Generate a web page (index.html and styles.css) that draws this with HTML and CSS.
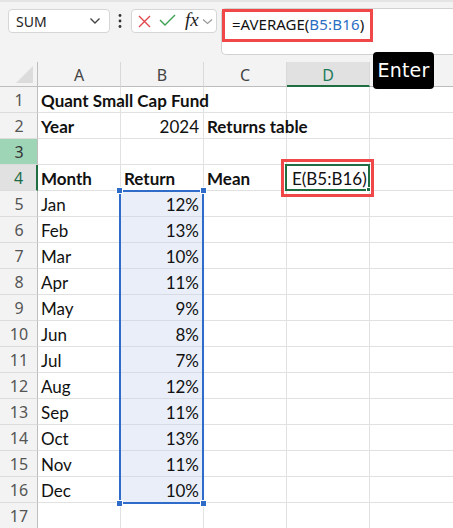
FILE: index.html
```html
<!DOCTYPE html>
<html>
<head>
<meta charset="utf-8">
<link rel="stylesheet" href="styles.css">
</head>
<body>
<div class="app">
  <div class="toolbar">
    <div class="namebox">
      <span class="nb-text">SUM</span>
      <svg class="nb-chev" width="12" height="8" viewBox="0 0 12 8"><path d="M1.5 1.5 L6 6 L10.5 1.5" fill="none" stroke="#444" stroke-width="1.4"/></svg>
    </div>
    <svg class="dots" width="4" height="16" viewBox="0 0 4 16"><circle cx="2" cy="2.5" r="1.4" fill="#333"/><circle cx="2" cy="8" r="1.4" fill="#333"/><circle cx="2" cy="13.5" r="1.4" fill="#333"/></svg>
    <div class="fxbox">
      <svg class="ic-x" width="13" height="13" viewBox="0 0 13 13"><path d="M1 1 L12 12 M12 1 L1 12" stroke="#e0474c" stroke-width="1.4" fill="none"/></svg>
      <svg class="ic-check" width="17" height="12" viewBox="0 0 17 12"><path d="M1 6 L6 11 L16 1" stroke="#3c9f4f" stroke-width="1.4" fill="none"/></svg>
      <span class="fx">fx</span>
      <svg class="fx-chev" width="11" height="7" viewBox="0 0 11 7"><path d="M1 1.5 L5.5 5.5 L10 1.5" fill="none" stroke="#999" stroke-width="1.2"/></svg>
    </div>
    <div class="formulabar">
      <span class="formula">=AVERAGE(<span class="ref">B5:B16</span>)</span>
    </div>
  </div>

  <div class="grid">
    <div class="corner"><span class="tri"></span></div>
    <div class="ch">A</div>
    <div class="ch">B</div>
    <div class="ch">C</div>
    <div class="ch ch-active">D</div>
    <div class="ch"></div>

    <div class="rh">1</div>
    <div class="c b over">Quant Small Cap Fund</div><div class="c"></div><div class="c"></div><div class="c"></div><div class="c"></div>

    <div class="rh">2</div>
    <div class="c b">Year</div><div class="c r">2024</div><div class="c b over">Returns table</div><div class="c"></div><div class="c"></div>

    <div class="rh rh-green">3</div>
    <div class="c"></div><div class="c"></div><div class="c"></div><div class="c"></div><div class="c"></div>

    <div class="rh rh-active">4</div>
    <div class="c b">Month</div><div class="c b">Return</div><div class="c b">Mean</div><div class="c edit">E(B5:B16)</div><div class="c"></div>

    <div class="rh">5</div><div class="c">Jan</div><div class="c r sel">12%</div><div class="c"></div><div class="c"></div><div class="c"></div>
    <div class="rh">6</div><div class="c">Feb</div><div class="c r sel">13%</div><div class="c"></div><div class="c"></div><div class="c"></div>
    <div class="rh">7</div><div class="c">Mar</div><div class="c r sel">10%</div><div class="c"></div><div class="c"></div><div class="c"></div>
    <div class="rh">8</div><div class="c">Apr</div><div class="c r sel">11%</div><div class="c"></div><div class="c"></div><div class="c"></div>
    <div class="rh">9</div><div class="c">May</div><div class="c r sel">9%</div><div class="c"></div><div class="c"></div><div class="c"></div>
    <div class="rh">10</div><div class="c">Jun</div><div class="c r sel">8%</div><div class="c"></div><div class="c"></div><div class="c"></div>
    <div class="rh">11</div><div class="c">Jul</div><div class="c r sel">7%</div><div class="c"></div><div class="c"></div><div class="c"></div>
    <div class="rh">12</div><div class="c">Aug</div><div class="c r sel">12%</div><div class="c"></div><div class="c"></div><div class="c"></div>
    <div class="rh">13</div><div class="c">Sep</div><div class="c r sel">11%</div><div class="c"></div><div class="c"></div><div class="c"></div>
    <div class="rh">14</div><div class="c">Oct</div><div class="c r sel">13%</div><div class="c"></div><div class="c"></div><div class="c"></div>
    <div class="rh">15</div><div class="c">Nov</div><div class="c r sel">11%</div><div class="c"></div><div class="c"></div><div class="c"></div>
    <div class="rh">16</div><div class="c">Dec</div><div class="c r sel">10%</div><div class="c"></div><div class="c"></div><div class="c"></div>
    <div class="rh">17</div><div class="c"></div><div class="c"></div><div class="c"></div><div class="c"></div><div class="c"></div>

    <div class="selbox">
      <span class="h h-tl"></span><span class="h h-tr"></span><span class="h h-bl"></span><span class="h h-br"></span>
    </div>
    <div class="editbox"><span class="h h-br2"></span></div>
  </div>

  <div class="redbox red-formula"></div>
  <div class="redbox red-cell"></div>
  <div class="tooltip">Enter</div>
</div>
</body>
</html>
```

FILE: styles.css
```css
* { box-sizing: border-box; }
html, body { margin: 0; padding: 0; }
body {
  width: 453px;
  height: 528px;
  overflow: hidden;
  background: #f3f3f3;
  font-family: "Open Sans", "Noto Sans", sans-serif;
}
.app { position: relative; width: 453px; height: 528px; overflow: hidden; }

.toolbar {
  height: 62px;
  display: flex;
  align-items: flex-start;
  padding-left: 8px;
  border-top: 2px solid #e4e4e4;
  padding-top: 7px;
}
.namebox {
  width: 102px;
  height: 24px;
  background: #fff;
  border: 1px solid #d6d6d6;
  border-radius: 4px;
  display: flex;
  align-items: center;
  justify-content: space-between;
  padding: 0 8px 0 7px;
}
.nb-text { font-size: 14px; color: #222; font-family: "Noto Sans", sans-serif; }
.nb-chev { display: block; }
.dots { margin: 4px 0 0 8px; display: block; }
.fxbox {
  margin-left: 9px;
  width: 86px;
  height: 24px;
  background: #fff;
  border: 1px solid #d6d6d6;
  border-radius: 4px;
  display: flex;
  align-items: center;
  padding-left: 6px;
}
.ic-x { display: block; }
.ic-check { display: block; margin-left: 8px; margin-top: -3px; }
.fx {
  font-family: "Liberation Serif", serif;
  font-style: italic;
  font-size: 19px;
  color: #222;
  margin-left: 9px;
  line-height: 1;
  margin-top: -3px;
}
.fx-chev { display: block; margin-left: 3px; }
.formulabar {
  margin-left: 4px;
  flex: 1;
  height: 47px;
  margin-top: -1px;
  background: #fff;
  border: 1px solid #d2d2d2;
  border-right: none;
  border-radius: 5px 0 0 5px;
  padding: 4px 0 0 10px;
}
.formula {
  font-family: "Noto Sans", sans-serif;
  font-size: 15px;
  color: #111;
}
.formula .ref { color: #2a6ec4; letter-spacing: 0.2px; }

.grid {
  position: relative;
  display: grid;
  grid-template-columns: 38px 83px 83px 83px 83px 84px;
  grid-template-rows: 25px;
  grid-auto-rows: 26px;
  background: #fff;
  font-family: "Lato", sans-serif;
}
.corner, .ch {
  background: #f3f3f3;
  border-right: 1px solid #d9d9d9;
  border-bottom: 1px solid #bdbdbd;
}
.corner { position: relative; border-right: 1px solid #bdbdbd; }
.tri {
  position: absolute;
  right: 4px;
  bottom: 3px;
  width: 0; height: 0;
  border-left: 17px solid transparent;
  border-bottom: 17px solid #dcdcdc;
}
.ch {
  font-family: "Noto Sans", sans-serif;
  font-size: 16px;
  color: #444;
  display: flex;
  align-items: center;
  justify-content: center;
  padding-top: 2px;
}
.ch-active {
  background: #e1e1e1;
  color: #1d7a5a;
  border-bottom: 2px solid #1e6e42;
}
.rh {
  background: #f3f3f3;
  border-right: 1px solid #bdbdbd;
  border-bottom: 1px solid #dcdcdc;
  font-family: "Noto Sans", sans-serif;
  font-size: 16px;
  color: #555;
  display: flex;
  align-items: center;
  justify-content: center;
  padding-left: 1px;
}
.rh-green { background: #9fd5b7; color: #333; }
.rh-active { background: #e1e1e1; color: #1d6a48; border-right: 2px solid #1e6e42; }

.c {
  border-right: 1px solid #e1e1e1;
  border-bottom: 1px solid #e1e1e1;
  font-size: 17px;
  color: #111;
  padding: 0 4px 0 3px;
  display: flex;
  align-items: center;
  white-space: nowrap;
  line-height: 1;
  padding-top: 1px;
}
.c.b { font-weight: 700; }
.c.r { justify-content: flex-end; }
.c.over { overflow: visible; position: relative; z-index: 1; }
.c.sel { background: #e9eef8; border-bottom-color: #d6dbe4; }
.c.edit { padding-left: 5px; overflow: hidden; }

.selbox {
  position: absolute;
  left: 119px;
  top: 128px;
  width: 85px;
  height: 314px;
  border: 2px solid #2f6bc8;
  pointer-events: none;
}
.h {
  position: absolute;
  width: 7px;
  height: 7px;
  background: #2f6bc8;
  border: 1px solid #fff;
}
.h-tl { left: -5px; top: -5px; }
.h-tr { right: -5px; top: -5px; }
.h-bl { left: -5px; bottom: -5px; }
.h-br { right: -5px; bottom: -5px; }
.editbox {
  position: absolute;
  left: 285px;
  top: 102px;
  width: 85px;
  height: 27px;
  border: 2px solid #1e6e42;
  pointer-events: none;
}
.h-br2 {
  position: absolute;
  right: -3px;
  bottom: -3px;
  width: 5px;
  height: 5px;
  background: #1e6e42;
  border: 1px solid #fff;
}

.redbox {
  position: absolute;
  border: 3px solid #f04848;
  pointer-events: none;
}
.red-formula { left: 222px; top: 9px; width: 151px; height: 33px; }
.red-cell { left: 281px; top: 159px; width: 93px; height: 38px; }

.tooltip {
  position: absolute;
  left: 373px;
  top: 52px;
  width: 61px;
  height: 37px;
  background: #000;
  border-radius: 4px;
  color: #fff;
  font-family: "DejaVu Sans", sans-serif;
  font-size: 19px;
  display: flex;
  align-items: center;
  justify-content: center;
  letter-spacing: 0.2px;
  padding-bottom: 1px;
}
```
